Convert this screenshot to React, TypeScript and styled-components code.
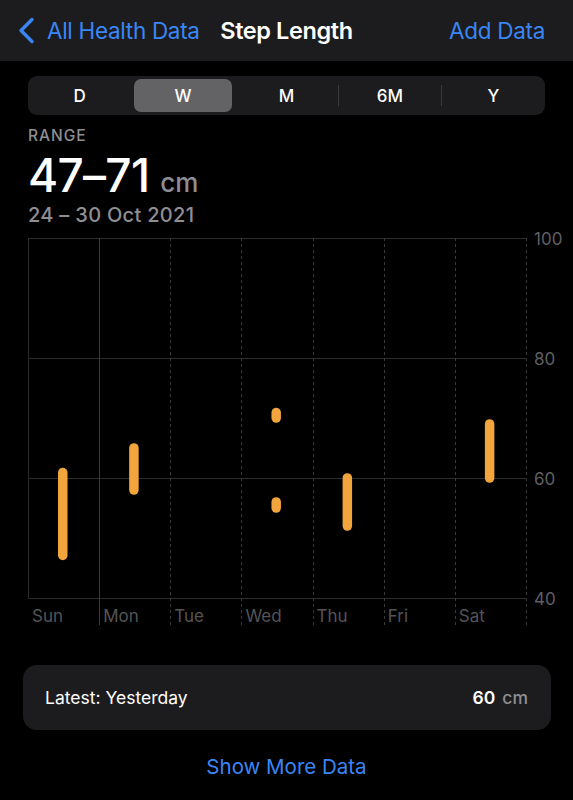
import React from 'react';
import styled, { createGlobalStyle } from 'styled-components';

const GlobalStyle = createGlobalStyle`
  html, body {
    margin: 0;
    padding: 0;
    background: #000;
  }
  body {
    font-family: Inter, 'Noto Sans', 'Liberation Sans', sans-serif;
    -webkit-font-smoothing: antialiased;
  }
`;

const BLUE = '#3a86f6';
const ORANGE = '#f3a53d';

const Page = styled.div`
  width: 573px;
  min-height: 800px;
  background: #000;
  color: #fff;
`;

const NavBar = styled.header`
  height: 61px;
  background: #1c1c1e;
  display: grid;
  grid-template-columns: 1fr auto 1fr;
  align-items: center;
  padding: 0 28px;
`;

const BackLink = styled.a`
  margin-left: -10px;
  display: flex;
  align-items: center;
  gap: 12px;
  color: ${BLUE};
  font-size: 22.5px;
  letter-spacing: -0.3px;
  text-decoration: none;
`;

const Title = styled.h1`
  margin: 0;
  font-size: 23.5px;
  font-weight: 600;
  letter-spacing: -0.4px;
  color: #fff;
`;

const NavAction = styled.a`
  justify-self: end;
  color: ${BLUE};
  font-size: 22.5px;
  letter-spacing: -0.3px;
  text-decoration: none;
`;

const Segmented = styled.div`
  margin: 15px 28px 0;
  height: 39px;
  border-radius: 9px;
  background: #1c1c1e;
  display: grid;
  grid-template-columns: repeat(5, 1fr);
`;

const Segment = styled.button<{ active?: boolean; divider?: boolean }>`
  position: relative;
  margin: 3px;
  border: none;
  border-radius: 7px;
  background: ${p => (p.active ? '#636366' : 'transparent')};
  color: #fff;
  font-family: inherit;
  font-size: 17px;
  font-weight: 500;
  padding: 0;
  &::before {
    content: '';
    display: ${p => (p.divider ? 'block' : 'none')};
    position: absolute;
    left: -3.5px;
    top: 6px;
    bottom: 6px;
    width: 1px;
    background: #3a3a3c;
  }
`;

const Summary = styled.section`
  padding: 12px 28px 0;
  display: flex;
  flex-direction: column;
`;

const Caption = styled.div`
  font-size: 15.5px;
  line-height: 18px;
  font-weight: 500;
  color: #8e8e93;
  letter-spacing: 1px;
`;

const BigValue = styled.div`
  margin-top: 4px;
  font-size: 46px;
  line-height: 52px;
  font-weight: 500;
  letter-spacing: -0.7px;
`;

const Unit = styled.span<{ size?: number }>`
  margin-left: ${p => (p.size ? 7 : 11)}px;
  font-size: ${p => p.size ?? 26}px;
  line-height: 1;
  font-weight: 500;
  letter-spacing: 0;
  color: #8e8e93;
`;

const DateRange = styled.div`
  margin-top: 2px;
  font-size: 20px;
  line-height: 24px;
  font-weight: 500;
  color: #8e8e93;
  letter-spacing: 0.3px;
`;

const ChartWrap = styled.div`
  padding-left: 28px;
  margin-top: 1px;
`;

const ChartSvg = styled.svg`
  display: block;
  overflow: visible;
  font-family: Inter, 'Noto Sans', 'Liberation Sans', sans-serif;
`;

const LatestCard = styled.div`
  margin: 35px 22px 0 23px;
  height: 65px;
  border-radius: 14px;
  background: #1c1c1e;
  display: flex;
  align-items: center;
  justify-content: space-between;
  padding: 0 23px 0 22px;
  font-size: 17.5px;
`;

const LatestLabel = styled.span`
  color: #fff;
`;

const LatestValue = styled.span`
  display: flex;
  align-items: baseline;
  font-weight: 600;
  color: #fff;
`;

const MoreLink = styled.a`
  display: block;
  margin-top: 25px;
  text-align: center;
  color: ${BLUE};
  font-size: 20.5px;
  line-height: 24px;
  text-decoration: none;
`;

const days = ['Sun', 'Mon', 'Tue', 'Wed', 'Thu', 'Fri', 'Sat'];

const ranges: { day: number; min: number; max: number }[] = [
  { day: 0, min: 46.3, max: 61.7 },
  { day: 1, min: 57.2, max: 65.8 },
  { day: 3, min: 69.2, max: 71.7 },
  { day: 3, min: 54.2, max: 56.8 },
  { day: 4, min: 51.2, max: 60.8 },
  { day: 6, min: 59.2, max: 69.8 },
];

const PLOT_W = 498;
const COL_W = PLOT_W / 7;
const TOP = 10;
const yOf = (v: number) => TOP + (100 - v) * 6;

const StepChart: React.FC = () => {
  const baseY = yOf(40);
  const footY = baseY + 27;
  return (
    <ChartSvg width={545} height={402}>
      {[100, 80, 60, 40].map(v => (
        <g key={v}>
          <line x1={0} x2={PLOT_W} y1={Math.round(yOf(v)) + 0.5} y2={Math.round(yOf(v)) + 0.5} stroke="#2c2c2e" strokeWidth={1} />
          <text x={506} y={yOf(v) + 7} fill="#5f5f63" fontSize={17}>{v}</text>
        </g>
      ))}
      {Array.from({ length: 8 }).map((_, i) => {
        const x = Math.round(i * COL_W) + 0.5;
        if (i === 0) return <line key={i} x1={x} x2={x} y1={TOP} y2={baseY} stroke="#2c2c2e" />;
        if (i === 1) return <line key={i} x1={x} x2={x} y1={TOP} y2={footY} stroke="#3a3a3c" />;
        return <line key={i} x1={x} x2={x} y1={TOP} y2={footY} stroke="#3a3a3c" strokeDasharray="3 3" />;
      })}
      {days.map((d, i) => (
        <text key={d} x={i * COL_W + 4} y={baseY + 24} fill="#545458" fontSize={17}>{d}</text>
      ))}
      {ranges.map((r, i) => {
        const cx = r.day * COL_W + COL_W / 2 - 0.8;
        const y1 = yOf(r.max);
        const y2 = yOf(r.min);
        return <rect key={i} x={cx - 4.75} y={y1} width={9.5} height={y2 - y1} rx={4.75} fill={ORANGE} />;
      })}
    </ChartSvg>
  );
};

const Chevron = () => (
  <svg width="17" height="27" viewBox="0 0 17 27">
    <polyline points="14,2.5 3,13.5 14,24.5" fill="none" stroke={BLUE} strokeWidth="3.4" strokeLinecap="round" strokeLinejoin="round" />
  </svg>
);

const App: React.FC = () => (
  <Page>
    <GlobalStyle />
    <NavBar>
      <BackLink href="#">
        <Chevron />
        All Health Data
      </BackLink>
      <Title>Step Length</Title>
      <NavAction href="#">Add Data</NavAction>
    </NavBar>

    <Segmented>
      <Segment>D</Segment>
      <Segment active>W</Segment>
      <Segment>M</Segment>
      <Segment divider>6M</Segment>
      <Segment divider>Y</Segment>
    </Segmented>

    <Summary>
      <Caption>RANGE</Caption>
      <BigValue>
        47–71<Unit>cm</Unit>
      </BigValue>
      <DateRange>24 – 30 Oct 2021</DateRange>
    </Summary>

    <ChartWrap>
      <StepChart />
    </ChartWrap>

    <LatestCard>
      <LatestLabel>Latest: Yesterday</LatestLabel>
      <LatestValue>
        60<Unit size={17.5}>cm</Unit>
      </LatestValue>
    </LatestCard>

    <MoreLink href="#">Show More Data</MoreLink>
  </Page>
);

export default App;
